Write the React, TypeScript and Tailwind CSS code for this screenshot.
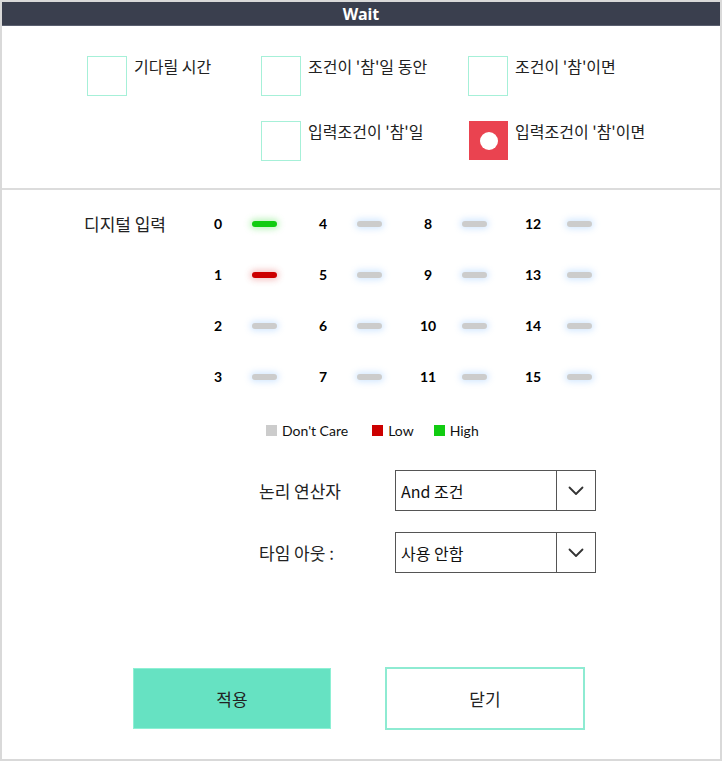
import React from "react";

const kr = { fontFamily: '"Noto Sans CJK KR", "Noto Sans", sans-serif' };
const num = { fontFamily: 'Lato, "Open Sans", sans-serif' };

function Check({ label, checked }: { label: string; checked?: boolean }) {
  return (
    <div className="flex items-start gap-[7px]">
      {checked ? (
        <div className="w-[39px] h-[39px] bg-[#ea4350] flex items-center justify-center">
          <div className="w-[18px] h-[18px] rounded-full bg-white" />
        </div>
      ) : (
        <div className="w-[40px] h-[40px] border border-[#a6f0d8] bg-white" />
      )}
      <span className="text-[16px] leading-[20px] text-[#222] whitespace-nowrap" style={kr}>
        {label}
      </span>
    </div>
  );
}

function Bar({ state }: { state: "high" | "low" | "none" }) {
  const cls =
    state === "high"
      ? "bg-[#11cc11] shadow-[0_0_6px_2px_rgba(60,220,60,0.35)]"
      : state === "low"
      ? "bg-[#cc0000] shadow-[0_0_6px_2px_rgba(220,60,60,0.3)]"
      : "bg-[#cccccc] shadow-[0_0_6px_2px_rgba(160,205,255,0.45)]";
  return <div className={`w-[25px] h-[6px] rounded-full ${cls}`} />;
}

function Chevron() {
  return (
    <svg width="16" height="10" viewBox="0 0 16 10" fill="none">
      <path d="M1.5 1.5 L8 8 L14.5 1.5" stroke="#333" strokeWidth="1.8" strokeLinecap="round" strokeLinejoin="round" />
    </svg>
  );
}

function Select({ value }: { value: string }) {
  return (
    <div className="w-[201px] h-[41px] border border-[#555] flex bg-white">
      <div className="flex-1 flex items-center pl-[5px] text-[16px] text-[#111]" style={kr}>
        {value}
      </div>
      <div className="w-[39px] border-l border-[#555] flex items-center justify-center">
        <Chevron />
      </div>
    </div>
  );
}

export default function App() {
  const cols = [0, 4, 8, 12];
  const rows = [0, 1, 2, 3];
  return (
    <div className="w-[722px] h-[761px] border-2 border-[#d9d9d9] bg-white flex flex-col overflow-hidden">
      <div className="h-[24px] bg-[#3a3f4e] border-b border-[#5b6070] flex items-center justify-center shrink-0">
        <span className="text-white text-[16px] font-bold" style={{ fontFamily: '"Noto Sans", sans-serif' }}>
          Wait
        </span>
      </div>

      <div className="h-[162px] pt-[30px] pl-[85px] flex flex-col gap-[25px] shrink-0">
        <div className="flex">
          <div className="w-[174px]">
            <Check label="기다릴 시간" />
          </div>
          <div className="w-[207px]">
            <Check label="조건이 '참'일 동안" />
          </div>
          <div>
            <Check label="조건이 '참'이면" />
          </div>
        </div>
        <div className="flex">
          <div className="w-[174px]" />
          <div className="w-[207px]">
            <Check label="입력조건이 '참'일" />
          </div>
          <div className="pl-[1px]">
            <Check label="입력조건이 '참'이면" checked />
          </div>
        </div>
      </div>

      <div className="h-[2px] bg-[#dcdcdc] shrink-0" />

      <div className="flex pt-[8px] pl-[82px]">
        <div className="w-[119px] h-[51px] flex items-center text-[17px] text-[#222]" style={kr}>
          디지털 입력
        </div>
        <div className="flex">
          {cols.map((c) => (
            <div key={c} className="w-[105px] flex flex-col">
              {rows.map((r) => {
                const n = c + r;
                const st = n === 0 ? "high" : n === 1 ? "low" : "none";
                return (
                  <div key={n} className="h-[51px] flex items-center">
                    <div className="w-[30px] text-center text-[14px] font-bold text-black" style={num}>
                      {n}
                    </div>
                    <div className="ml-[19px]">
                      <Bar state={st} />
                    </div>
                  </div>
                );
              })}
            </div>
          ))}
        </div>
      </div>

      <div className="flex items-center pl-[264px] mt-[18px] h-[20px] text-[14px] text-[#111]" style={num}>
        <div className="w-[11px] h-[11px] bg-[#cccccc]" />
        <span className="ml-[5px]">Don't Care</span>
        <div className="w-[11px] h-[11px] bg-[#cc0000] ml-[24px]" />
        <span className="ml-[5px]">Low</span>
        <div className="w-[11px] h-[11px] bg-[#11cc11] ml-[20px]" />
        <span className="ml-[5px]">High</span>
      </div>

      <div className="flex flex-col gap-[21px] mt-[30px] pl-[257px]">
        <div className="flex items-center">
          <div className="w-[136px] text-[17px] text-[#222]" style={kr}>
            논리 연산자
          </div>
          <Select value="And 조건" />
        </div>
        <div className="flex items-center">
          <div className="w-[136px] text-[17px] text-[#222]" style={kr}>
            타임 아웃 :
          </div>
          <Select value="사용 안함" />
        </div>
      </div>

      <div className="flex items-center mt-[94px] pl-[131px]">
        <div className="w-[198px] h-[61px] bg-[#66e2c2] border border-[#8ef0d4] flex items-center justify-center text-[17px] text-[#222]" style={kr}>
          적용
        </div>
        <div className="ml-[54px] w-[200px] h-[63px] border-2 border-[#8eebd2] bg-white flex items-center justify-center text-[17px] text-[#222]" style={kr}>
          닫기
        </div>
      </div>
    </div>
  );
}
